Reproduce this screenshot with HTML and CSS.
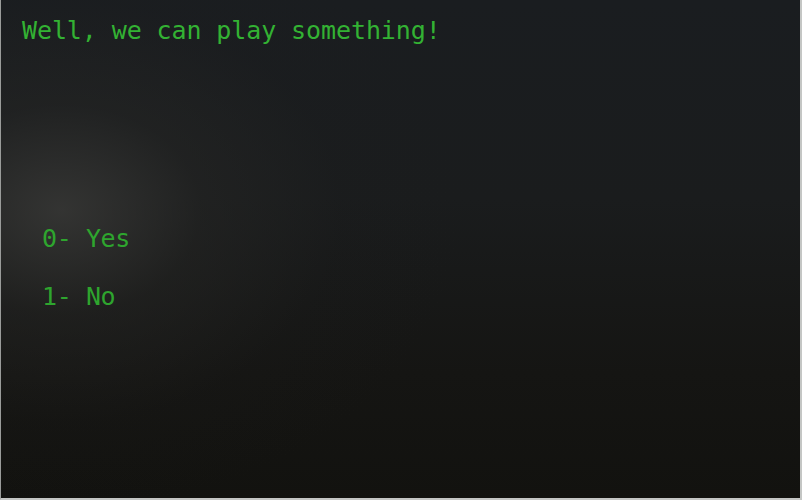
FILE: index.html
```html
<!DOCTYPE html>
<html lang="en">
<head>
<meta charset="utf-8">
<title>Terminal</title>
<link rel="stylesheet" href="styles.css">
</head>
<body>
<main class="screen">
  <p class="title">Well, we can play something!</p>
  <ul class="options">
    <li class="option">0- Yes</li>
    <li class="option">1- No</li>
  </ul>
</main>
</body>
</html>
```

FILE: styles.css
```css
html, body {
  margin: 0;
  padding: 0;
  background: #141412;
}

.screen {
  box-sizing: border-box;
  width: 802px;
  height: 500px;
  display: flex;
  flex-direction: column;
  padding: 16px 0 0 0;
  border-left: 1px solid #9a9c9a;
  border-right: 2px solid #c4c6c4;
  border-bottom: 2px solid #c4c6c4;
  background:
    radial-gradient(ellipse 400px 300px at 60px 210px, rgba(58, 58, 56, 0.8) 0%, rgba(40, 40, 38, 0.45) 35%, rgba(30, 30, 30, 0.12) 70%, rgba(30, 30, 30, 0) 100%),
    linear-gradient(to bottom, #1a1d20 0%, #1a1c1d 40%, #151513 75%, #12120f 100%);
  font-family: "DejaVu Sans Mono", "Liberation Mono", monospace;
  font-size: 25px;
  line-height: 30px;
  color: #2fa82f;
}

.title {
  margin: 0;
  padding-left: 21px;
  color: #33b233;
  letter-spacing: -0.1px;
}

.options {
  list-style: none;
  margin: 178px 0 0 0;
  padding: 0 0 0 41px;
  display: flex;
  flex-direction: column;
  gap: 28px;
}

.option {
  color: #2ea52e;
  letter-spacing: -0.4px;
}
```
